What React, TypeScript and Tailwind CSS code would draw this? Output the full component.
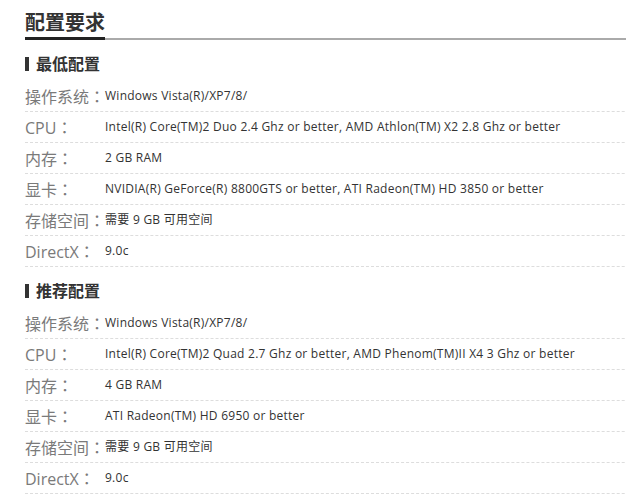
const sections = [
  {
    title: "最低配置",
    rows: [
      ["操作系统", "Windows Vista(R)/XP7/8/"],
      ["CPU", "Intel(R) Core(TM)2 Duo 2.4 Ghz or better, AMD Athlon(TM) X2 2.8 Ghz or better"],
      ["内存", "2 GB RAM"],
      ["显卡", "NVIDIA(R) GeForce(R) 8800GTS or better, ATI Radeon(TM) HD 3850 or better"],
      ["存储空间", "需要 9 GB 可用空间"],
      ["DirectX", "9.0c"],
    ],
  },
  {
    title: "推荐配置",
    rows: [
      ["操作系统", "Windows Vista(R)/XP7/8/"],
      ["CPU", "Intel(R) Core(TM)2 Quad 2.7 Ghz or better, AMD Phenom(TM)II X4 3 Ghz or better"],
      ["内存", "4 GB RAM"],
      ["显卡", "ATI Radeon(TM) HD 6950 or better"],
      ["存储空间", "需要 9 GB 可用空间"],
      ["DirectX", "9.0c"],
    ],
  },
];

export default function App() {
  return (
    <div
      className="w-[626px] h-[501px] overflow-hidden bg-white pl-[25px]"
      style={{ fontFamily: '"Open Sans", "Noto Sans CJK SC", sans-serif' }}
    >
      {/* title with two-tone underline */}
      <div className="pt-[9px] border-b-2 border-[#aaaaaa] w-[700px]">
        <h1 className="inline-block -mb-[2px] border-b-[3px] border-[#222] text-[20px] leading-[28px] font-bold text-[#333]">
          配置要求
        </h1>
      </div>

      {sections.map((s) => (
        <section key={s.title}>
          <div className="pt-[14px] pb-[7px] flex items-center h-[41px]">
            <span className="w-[4px] h-[14px] bg-[#333] mr-[7px]" />
            <h2 className="text-[16px] leading-[20px] font-bold text-[#333]">{s.title}</h2>
          </div>
          {s.rows.map(([k, v], i) => (
            <div
              key={i}
              className="h-[31px] flex items-center border-b border-dashed border-[#dddddd] w-[700px]"
            >
              <span className="min-w-[80px] text-[16px] text-[#7a7a7a]">
                {k}
                <span className="font-['Noto_Sans_CJK_TC',sans-serif]">：</span>
              </span>
              <span className="text-[12px] tracking-[0.25px] text-[#333]">{v}</span>
            </div>
          ))}
        </section>
      ))}
    </div>
  );
}
